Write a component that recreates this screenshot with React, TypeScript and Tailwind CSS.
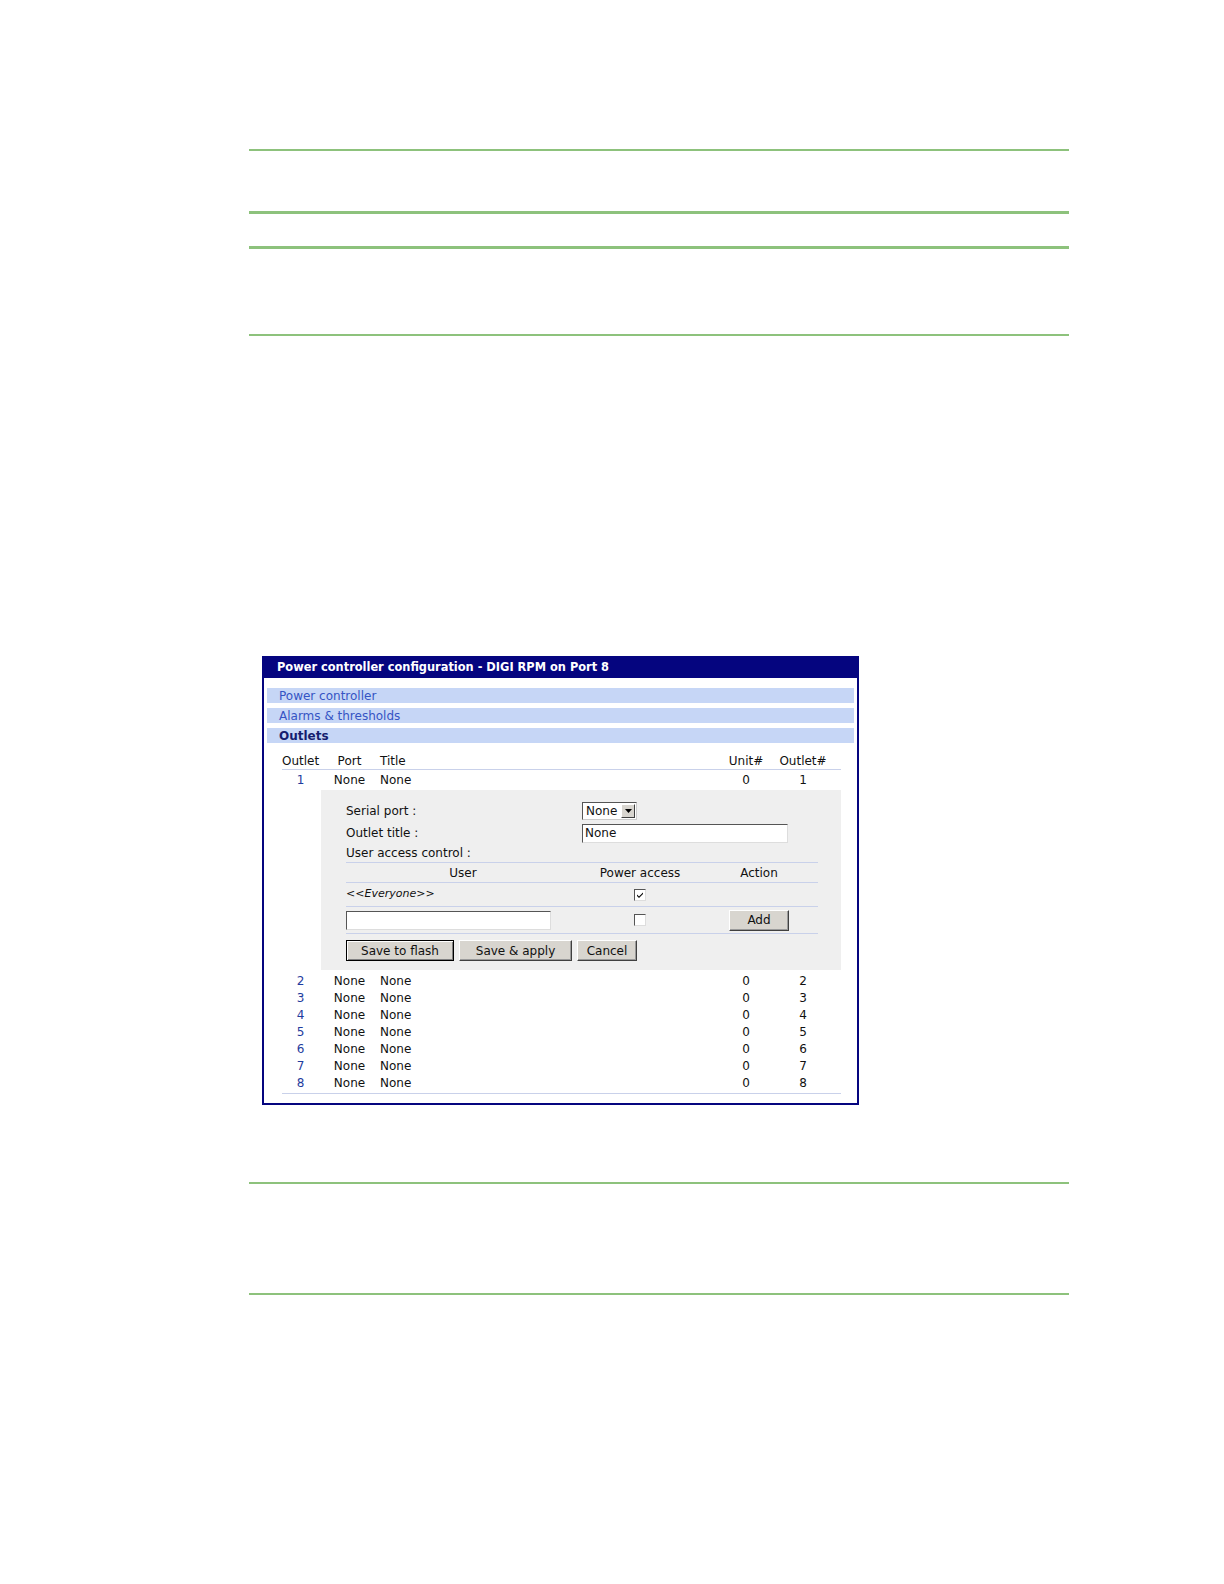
import React from 'react';

const font = { fontFamily: '"DejaVu Sans", Verdana, sans-serif' };

type Row = { outlet: number; port: string; title: string; unit: number };

const rows: Row[] = Array.from({ length: 8 }, (_, i) => ({
  outlet: i + 1,
  port: 'None',
  title: 'None',
  unit: 0,
}));

const GreenLine = ({ className }: { className: string }) => (
  <div className={`w-[820px] bg-[#8dc27c] ${className}`} />
);

const Button = ({ label, width, primary }: { label: string; width: string; primary?: boolean }) => (
  <button
    className={`${width} h-[21px] bg-[#d8d5cf] text-[12px] leading-none text-[#111] ${
      primary
        ? 'border border-black shadow-[inset_1px_1px_0_#fff,inset_-1px_-1px_0_#808080]'
        : 'border border-t-white border-l-white border-r-[#404040] border-b-[#404040] shadow-[inset_-1px_-1px_0_#9a9a9a]'
    }`}
  >
    {label}
  </button>
);

const Checkbox = ({ checked }: { checked?: boolean }) => (
  <div className="flex h-[12px] w-[12px] items-center justify-center border border-t-[#555] border-l-[#555] border-r-[#ddd] border-b-[#ddd] bg-white">
    {checked && (
      <svg width="8" height="8" viewBox="0 0 8 8">
        <path d="M1 3.5 L3 5.5 L7 1.5 L7 3 L3 7 L1 5 Z" fill="#000" />
      </svg>
    )}
  </div>
);

const OutletRow = ({ row }: { row: Row }) => (
  <div className="flex h-[17px] items-center text-[12px] text-[#111]">
    <span className="w-[37px] text-center text-[#1f3c9e]">{row.outlet}</span>
    <span className="w-[61px] text-center">{row.port}</span>
    <span className="w-[340px]">{row.title}</span>
    <span className="w-[52px] text-center">{row.unit}</span>
    <span className="w-[62px] text-center">{row.outlet}</span>
  </div>
);

const OutletPanel = () => (
  <div className="ml-[39px] w-[520px] bg-[#efefef] pb-[9px] pl-[25px] pr-[23px] pt-[9px] text-[12px] text-[#111]">
    <div className="flex h-[23px] items-center">
      <span className="w-[236px]">Serial port :</span>
      <div className="flex h-[18px] w-[55px] items-center border border-t-[#555] border-l-[#555] border-r-[#ccc] border-b-[#ccc] bg-white">
        <span className="flex-1 pl-[3px] leading-none">None</span>
        <div className="mr-[1px] flex h-[14px] w-[14px] items-center justify-center border border-t-white border-l-white border-r-[#404040] border-b-[#404040] bg-[#d8d5cf]">
          <svg width="7" height="4" viewBox="0 0 7 4">
            <path d="M0 0 H7 L3.5 4 Z" fill="#000" />
          </svg>
        </div>
      </div>
    </div>
    <div className="flex h-[22px] items-center">
      <span className="w-[236px]">Outlet title :</span>
      <div className="flex h-[19px] w-[206px] items-center border border-t-[#555] border-l-[#555] border-r-[#ddd] border-b-[#ddd] bg-white pl-[2px] leading-none">
        None
      </div>
    </div>
    <div className="flex h-[18px] items-center">User access control :</div>
    <div className="flex h-[21px] items-center border-y border-[#c9d1ea]">
      <span className="w-[234px] text-center">User</span>
      <span className="w-[120px] text-center">Power access</span>
      <span className="w-[118px] text-center">Action</span>
    </div>
    <div className="flex h-[24px] items-center border-b border-[#c9d1ea]">
      <span className="w-[234px] text-[11px] italic">&lt;&lt;Everyone&gt;&gt;</span>
      <span className="flex w-[120px] justify-center">
        <Checkbox checked />
      </span>
    </div>
    <div className="flex h-[27px] items-center border-b border-[#c9d1ea]">
      <span className="w-[234px]">
        <div className="h-[19px] w-[205px] border border-t-[#555] border-l-[#555] border-r-[#ddd] border-b-[#ddd] bg-white" />
      </span>
      <span className="flex w-[120px] justify-center">
        <Checkbox />
      </span>
      <span className="flex w-[118px] justify-center">
        <Button label="Add" width="w-[60px]" />
      </span>
    </div>
    <div className="mt-[6px] flex gap-[5px]">
      <Button label="Save to flash" width="w-[108px]" primary />
      <Button label="Save & apply" width="w-[113px]" />
      <Button label="Cancel" width="w-[60px]" />
    </div>
  </div>
);

export default function App() {
  return (
    <div className="h-[1584px] overflow-hidden bg-white pt-[149px]" style={font}>
      <div className="ml-[249px]">
        <GreenLine className="h-[2px]" />
        <GreenLine className="mt-[60px] h-[3px]" />
        <GreenLine className="mt-[32px] h-[3px]" />
        <GreenLine className="mt-[85px] h-[2px]" />
      </div>

      <div className="ml-[262px] mt-[320px] h-[449px] w-[597px] border-2 border-[#05057f] bg-white">
        <div className="flex h-[20px] items-center bg-[#05057f] px-[13px] text-[11.4px] font-bold text-white">
          Power controller configuration - DIGI RPM on Port 8
        </div>
        <div className="mx-[3px] mt-[10px] flex flex-col gap-[5px] text-[12px]">
          <div className="flex h-[15px] items-center bg-[#c6d6f6] pl-[12px] text-[#3554c4]">Power controller</div>
          <div className="flex h-[15px] items-center bg-[#c6d6f6] pl-[12px] text-[#3554c4]">Alarms &amp; thresholds</div>
          <div className="flex h-[15px] items-center bg-[#c6d6f6] pl-[12px] font-bold text-[#141d6e]">Outlets</div>
        </div>
        <div className="ml-[18px] mt-[10px] w-[559px]">
          <div className="flex h-[17px] items-center border-b border-[#c9d1ea] text-[12px] text-[#111]">
            <span className="w-[37px] text-center">Outlet</span>
            <span className="w-[61px] text-center">Port</span>
            <span className="w-[340px]">Title</span>
            <span className="w-[52px] text-center">Unit#</span>
            <span className="w-[62px] text-center">Outlet#</span>
          </div>
          <div className="flex h-[20px] items-center">
            <OutletRow row={rows[0]} />
          </div>
          <OutletPanel />
          <div className="mt-[2px] border-b border-[#c9d1ea] pb-[2px]">
            {rows.slice(1).map((r) => (
              <OutletRow key={r.outlet} row={r} />
            ))}
          </div>
        </div>
      </div>

      <div className="ml-[249px]">
        <GreenLine className="mt-[77px] h-[2px]" />
        <GreenLine className="mt-[109px] h-[2px]" />
      </div>
    </div>
  );
}
